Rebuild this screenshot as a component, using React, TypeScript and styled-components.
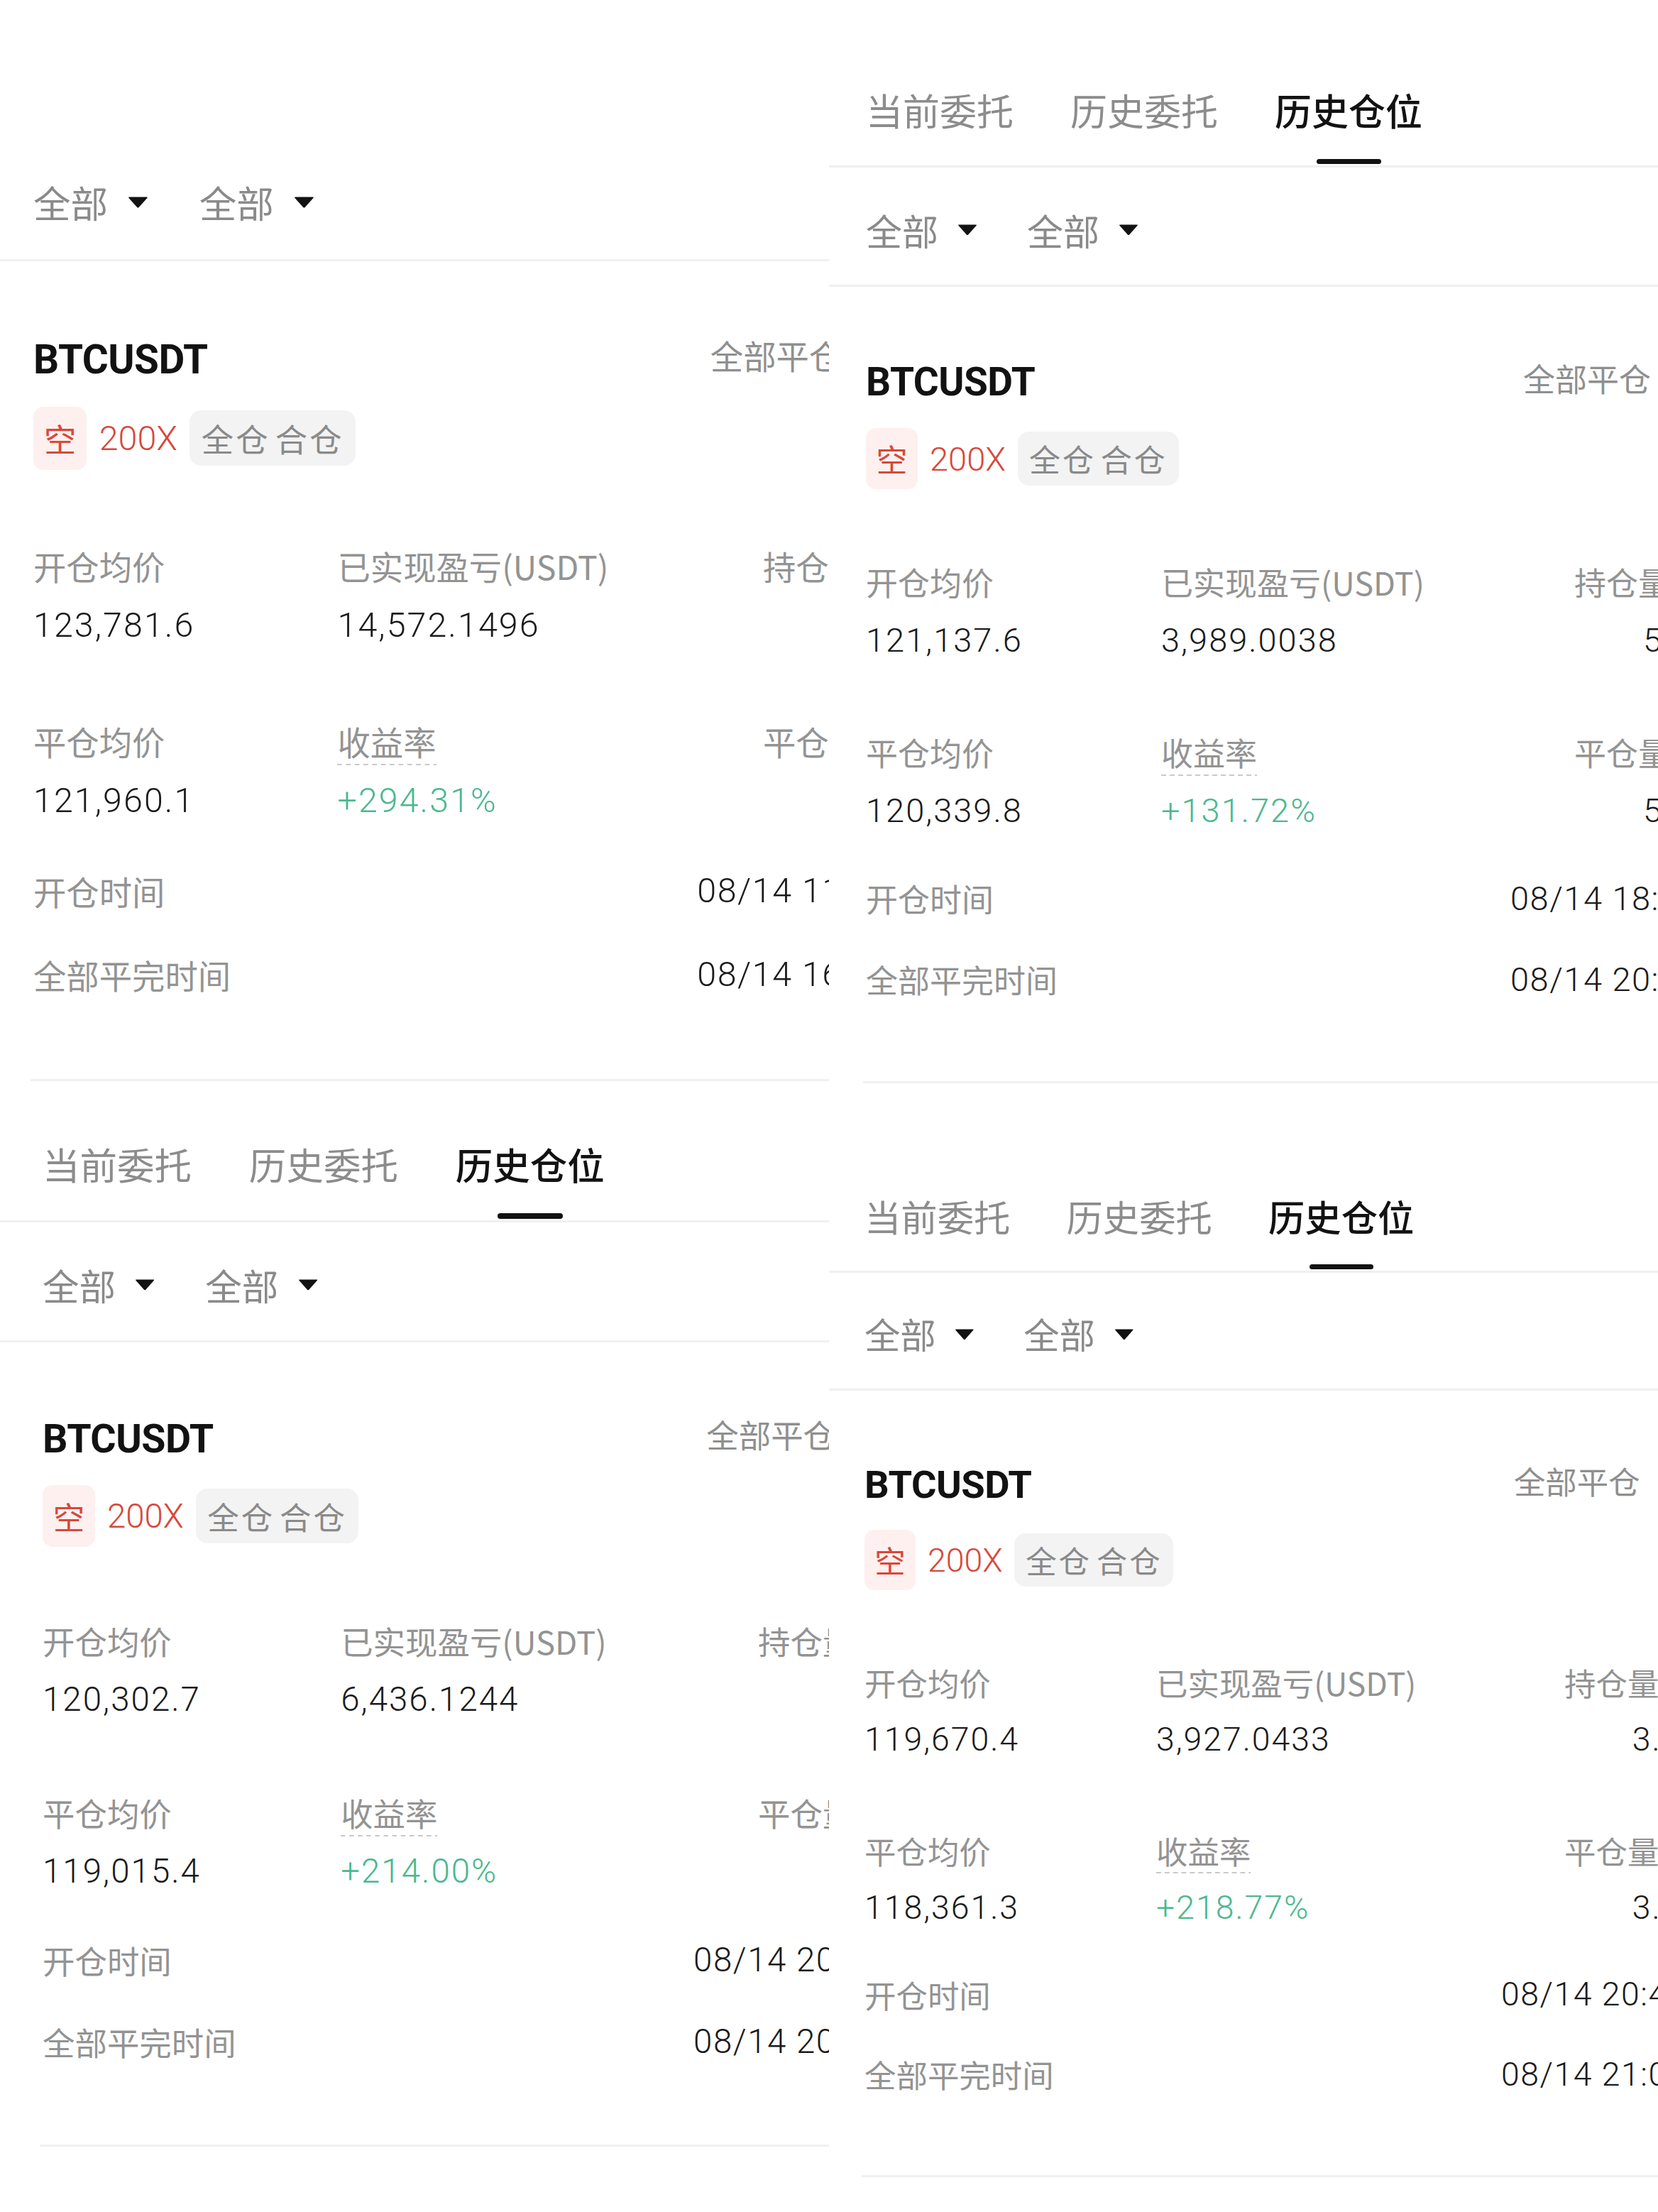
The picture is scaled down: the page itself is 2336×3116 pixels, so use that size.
import React from "react";
import styled, { createGlobalStyle, css } from "styled-components";

const u = (n: number) => `calc(${n}px * var(--k))`;

const Global = createGlobalStyle`
  html, body { margin: 0; padding: 0; background: #ffffff; }
  body {
    font-family: "Noto Sans CJK SC", "Noto Sans", sans-serif;
    -webkit-font-smoothing: antialiased;
  }
`;

const NUM_FONT = `"Roboto", "Liberation Sans", sans-serif`;

const Page = styled.div`
  width: 2336px;
  height: 3116px;
  display: grid;
  grid-template-columns: 1168px 1168px;
  background: #ffffff;
  overflow: hidden;
`;

const Column = styled.div`
  display: flex;
  flex-direction: column;
  overflow: hidden;
  min-width: 0;
`;

const Panel = styled.section<{ $k: number; $top: number; $left: number }>`
  --k: ${(p) => p.$k};
  --l: ${(p) => p.$left}px;
  width: 1500px;
  flex-shrink: 0;
  display: flex;
  flex-direction: column;
  padding-top: ${(p) => p.$top}px;
`;

const TabBar = styled.div`
  display: flex;
  gap: ${u(80)};
  padding-left: var(--l);
  border-bottom: 3px solid #f0f0f0;
`;

const Tab = styled.div`
  display: flex;
  flex-direction: column;
  align-items: center;
`;

const TabLabel = styled.span<{ $active?: boolean }>`
  font-size: ${u(52)};
  line-height: ${u(60)};
  height: ${u(60)};
  white-space: nowrap;
  color: ${(p) => (p.$active ? "#121212" : "#8c8c8c")};
  font-weight: ${(p) => (p.$active ? 500 : 400)};
`;

const TabMark = styled.span<{ $active?: boolean }>`
  width: ${u(91)};
  height: ${u(7)};
  border-radius: ${u(4)};
  margin-top: ${u(39)};
  margin-bottom: ${u(2)};
  background: ${(p) => (p.$active ? "#121212" : "transparent")};
`;

const FilterBar = styled.div`
  display: flex;
  align-items: center;
  gap: ${u(70)};
  box-sizing: border-box;
  height: ${u(168)};
  padding-top: ${u(10)};
  padding-left: var(--l);
  border-bottom: 3px solid #f0f0f0;
`;

const FilterItem = styled.div`
  display: flex;
  align-items: center;
  gap: ${u(27)};
  font-size: ${u(51)};
  line-height: ${u(60)};
  color: #8a8a8a;
  white-space: nowrap;
`;

const Caret = styled.svg`
  width: ${u(28)};
  height: ${u(17)};
  display: block;
`;

const Card = styled.div`
  margin-left: calc(var(--l) - 4px);
  padding: ${u(104)} 0 ${u(87)} 4px;
  border-bottom: 3px solid #f0f0f0;
`;

const CardHead = styled.div`
  display: flex;
  justify-content: space-between;
  align-items: center;
  width: ${u(1106)};
  height: ${u(60)};
`;

const Symbol = styled.span`
  font-family: ${NUM_FONT};
  font-weight: 700;
  font-size: ${u(55)};
  color: #121212;
  letter-spacing: ${u(-0.5)};
`;

const CloseAll = styled.span`
  font-size: ${u(45)};
  color: #8f8f8f;
  margin-bottom: ${u(12)};
  white-space: nowrap;
`;

const Tags = styled.div`
  display: flex;
  align-items: center;
  gap: ${u(17)};
  margin-top: ${u(35)};
  height: ${u(86)};
`;

const SideTag = styled.span`
  display: flex;
  align-items: center;
  justify-content: center;
  width: ${u(73)};
  height: ${u(86)};
  border-radius: ${u(14)};
  background: #fdf0ef;
  color: #d8483a;
  font-size: ${u(44)};
`;

const Lever = styled.span`
  font-family: ${NUM_FONT};
  font-weight: 300;
  font-size: ${u(47)};
  color: #d8483a;
`;

const ModeTag = styled.span`
  display: flex;
  align-items: center;
  height: ${u(76)};
  padding: 0 ${u(16)};
  border-radius: ${u(16)};
  background: #f3f3f3;
  color: #8a8a8a;
  font-size: ${u(44)};
  letter-spacing: ${u(3)};
  word-spacing: ${u(-6)};
  white-space: nowrap;
`;

const Stats = styled.div`
  display: grid;
  grid-template-columns: ${u(416)} ${u(582)} auto;
  row-gap: ${u(105)};
  margin-top: ${u(106)};
`;

const Stat = styled.div`
  display: flex;
  flex-direction: column;
  align-items: flex-start;
`;

const StatLabel = styled.span<{ $tip?: boolean }>`
  font-size: ${u(45)};
  line-height: ${u(50)};
  height: ${u(50)};
  color: #939393;
  white-space: nowrap;
  ${(p) =>
    p.$tip &&
    css`
      box-sizing: content-box;
      padding-bottom: ${u(8)};
      margin-bottom: ${u(-8)};
      background-image: linear-gradient(to right, #c9c9c9 55%, transparent 55%);
      background-size: ${u(12)} 2px;
      background-repeat: repeat-x;
      background-position: left bottom;
    `}
`;

const StatValue = styled.span<{ $tone?: "up"; $indent?: boolean }>`
  font-family: ${NUM_FONT};
  font-weight: 300;
  font-size: ${u(47)};
  line-height: ${u(56)};
  height: ${u(56)};
  margin-top: ${u(29)};
  margin-left: ${(p) => (p.$indent ? u(97) : "0")};
  letter-spacing: ${u(2)};
  white-space: nowrap;
  color: ${(p) => (p.$tone === "up" ? "#4bb88e" : "#1b1b1b")};
`;

const Times = styled.div`
  margin-top: ${u(38)};
`;

const TimeRow = styled.div`
  display: grid;
  grid-template-columns: ${u(908)} auto;
  align-items: center;
  height: ${u(114)};
`;

const TimeLabel = styled.span`
  font-size: ${u(45)};
  color: #939393;
  white-space: nowrap;
`;

const TimeValue = styled.span`
  font-family: ${NUM_FONT};
  font-weight: 300;
  font-size: ${u(47)};
  letter-spacing: ${u(1.5)};
  color: #1b1b1b;
  white-space: nowrap;
`;

type Shot = {
  k: number;
  top: number;
  left: number;
  tabs: boolean;
  open: string;
  pnl: string;
  hold: string;
  close: string;
  rate: string;
  closeQty: string;
  openTime: string;
  closeTime: string;
};

const leftShots: Shot[] = [
  {
    k: 1.03,
    top: 195,
    left: 47,
    tabs: false,
    open: "123,781.6",
    pnl: "14,572.1496",
    hold: "8.000",
    close: "121,960.1",
    rate: "+294.31%",
    closeQty: "8.000",
    openTime: "08/14 11:26:47",
    closeTime: "08/14 16:05:12",
  },
  {
    k: 1.01,
    top: 86,
    left: 60,
    tabs: true,
    open: "120,302.7",
    pnl: "6,436.1244",
    hold: "5.400",
    close: "119,015.4",
    rate: "+214.00%",
    closeQty: "5.400",
    openTime: "08/14 20:12:33",
    closeTime: "08/14 20:58:09",
  },
];

const rightShots: Shot[] = [
  {
    k: 1,
    top: 125,
    left: 52,
    tabs: true,
    open: "121,137.6",
    pnl: "3,989.0038",
    hold: "5.000",
    close: "120,339.8",
    rate: "+131.72%",
    closeQty: "5.000",
    openTime: "08/14 18:31:05",
    closeTime: "08/14 20:07:44",
  },
  {
    k: 0.988,
    top: 157,
    left: 50,
    tabs: true,
    open: "119,670.4",
    pnl: "3,927.0433",
    hold: "3.000",
    close: "118,361.3",
    rate: "+218.77%",
    closeQty: "3.000",
    openTime: "08/14 20:41:18",
    closeTime: "08/14 21:03:52",
  },
];

const tabNames = ["当前委托", "历史委托", "历史仓位"];

function CaretIcon() {
  return (
    <Caret viewBox="0 0 28 17" aria-hidden>
      <path d="M2 1.5 H26 Q27.5 1.5 26.6 2.8 L15.2 15.6 Q14 16.8 12.8 15.6 L1.4 2.8 Q0.5 1.5 2 1.5 Z" fill="#121212" />
    </Caret>
  );
}

function Screenshot({ s }: { s: Shot }) {
  return (
    <Panel $k={s.k} $top={s.top} $left={s.left}>
      {s.tabs && (
        <TabBar>
          {tabNames.map((t, i) => (
            <Tab key={t}>
              <TabLabel $active={i === 2}>{t}</TabLabel>
              <TabMark $active={i === 2} />
            </Tab>
          ))}
        </TabBar>
      )}
      <FilterBar>
        <FilterItem>
          全部
          <CaretIcon />
        </FilterItem>
        <FilterItem>
          全部
          <CaretIcon />
        </FilterItem>
      </FilterBar>
      <Card>
        <CardHead>
          <Symbol>BTCUSDT</Symbol>
          <CloseAll>全部平仓</CloseAll>
        </CardHead>
        <Tags>
          <SideTag>空</SideTag>
          <Lever>200X</Lever>
          <ModeTag>全仓 合仓</ModeTag>
        </Tags>
        <Stats>
          <Stat>
            <StatLabel>开仓均价</StatLabel>
            <StatValue>{s.open}</StatValue>
          </Stat>
          <Stat>
            <StatLabel>已实现盈亏(USDT)</StatLabel>
            <StatValue>{s.pnl}</StatValue>
          </Stat>
          <Stat>
            <StatLabel>持仓量(BTC)</StatLabel>
            <StatValue $indent>{s.hold}</StatValue>
          </Stat>
          <Stat>
            <StatLabel>平仓均价</StatLabel>
            <StatValue>{s.close}</StatValue>
          </Stat>
          <Stat>
            <StatLabel $tip>收益率</StatLabel>
            <StatValue $tone="up">{s.rate}</StatValue>
          </Stat>
          <Stat>
            <StatLabel>平仓量(BTC)</StatLabel>
            <StatValue $indent>{s.closeQty}</StatValue>
          </Stat>
        </Stats>
        <Times>
          <TimeRow>
            <TimeLabel>开仓时间</TimeLabel>
            <TimeValue>{s.openTime}</TimeValue>
          </TimeRow>
          <TimeRow>
            <TimeLabel>全部平完时间</TimeLabel>
            <TimeValue>{s.closeTime}</TimeValue>
          </TimeRow>
        </Times>
      </Card>
    </Panel>
  );
}

export default function App() {
  return (
    <>
      <Global />
      <Page>
        <Column>
          {leftShots.map((s, i) => (
            <Screenshot key={i} s={s} />
          ))}
        </Column>
        <Column>
          {rightShots.map((s, i) => (
            <Screenshot key={i} s={s} />
          ))}
        </Column>
      </Page>
    </>
  );
}
